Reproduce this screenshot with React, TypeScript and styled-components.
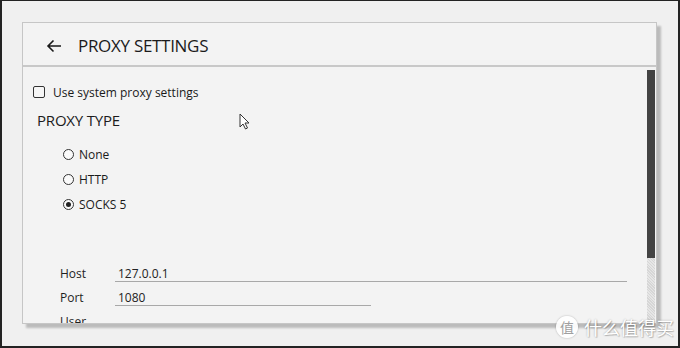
import React from "react";
import styled, { createGlobalStyle } from "styled-components";

const Global = createGlobalStyle`
  html, body { margin: 0; padding: 0; background: #f0f0f0; }
  body { font-family: "Open Sans", "Noto Sans", sans-serif; color: #1a1a1a; }
`;

const Frame = styled.div`
  position: relative;
  width: 680px;
  height: 348px;
  box-sizing: border-box;
  border: 2px solid #232323;
  border-top-width: 1px;
  background: #f0f0f0;
  padding: 21px 0 0 20px;
  overflow: hidden;
`;

const Panel = styled.div`
  width: 635px;
  height: 302px;
  box-sizing: border-box;
  border: 1px solid #c6c6c6;
  background: #f3f3f3;
  box-shadow: 4px 4px 2px rgba(0, 0, 0, 0.22);
  display: flex;
  flex-direction: column;
`;

const Header = styled.div`
  height: 42px;
  flex: none;
  display: flex;
  align-items: center;
  border-bottom: 2px solid #c8c8c8;
  padding-left: 23px;
`;

const BackButton = styled.div`
  width: 16px;
  height: 16px;
  display: flex;
  align-items: center;
  justify-content: center;
  margin-right: 16px;
  margin-top: 3px;
`;

const Title = styled.div`
  font-size: 17px;
  letter-spacing: -0.3px;
  color: #1b1b1b;
  margin-top: 3px;
`;

const Body = styled.div`
  flex: 1;
  display: flex;
  overflow: hidden;
`;

const Content = styled.div`
  flex: 1;
  padding: 17px 0 0 10px;
  overflow: hidden;
`;

const CheckRow = styled.label`
  display: flex;
  align-items: center;
  gap: 8px;
  font-size: 12px;
  height: 16px;
`;

const CheckBox = styled.span`
  width: 10px;
  height: 10px;
  border: 1.5px solid #333;
  border-radius: 2px;
  background: #f6f6f6;
`;

const Section = styled.div`
  font-size: 15px;
  letter-spacing: -0.2px;
  margin: 10px 0 0 4px;
  color: #1b1b1b;
`;

const RadioList = styled.div`
  display: flex;
  flex-direction: column;
  gap: 9px;
  margin: 16px 0 0 30px;
`;

const RadioRow = styled.div`
  display: flex;
  align-items: center;
  gap: 5px;
  font-size: 12px;
  height: 16px;
`;

const RadioCircle = styled.span<{ $on?: boolean }>`
  width: 9px;
  height: 9px;
  border: 1px solid #333;
  border-radius: 50%;
  background: #fafafa;
  display: flex;
  align-items: center;
  justify-content: center;
  &::after {
    content: "";
    width: 5px;
    height: 5px;
    border-radius: 50%;
    background: ${(p) => (p.$on ? "#222" : "transparent")};
  }
`;

const Fields = styled.div`
  display: grid;
  grid-template-columns: 55px auto;
  row-gap: 6px;
  margin: 53px 0 0 27px;
  font-size: 12px;
`;

const FieldLabel = styled.div`
  height: 18px;
  line-height: 18px;
  color: #1e1e1e;
`;

const FieldInput = styled.div<{ $w: number }>`
  width: ${(p) => p.$w}px;
  height: 17px;
  line-height: 17px;
  border-bottom: 1px solid #a8a8a8;
  padding-left: 3px;
  box-sizing: border-box;
  color: #222;
`;

const ScrollTrack = styled.div`
  width: 8px;
  margin: 3px 1px 2px 0;
  display: flex;
  flex-direction: column;
  background: repeating-linear-gradient(45deg, #d6d6d6 0 1px, #e6e6e6 1px 2px);
`;

const ScrollThumb = styled.div`
  height: 188px;
  background: #434343;
`;

const Cursor = styled.svg`
  position: absolute;
  left: 237px;
  top: 112px;
`;

const Watermark = styled.div`
  position: absolute;
  right: 4px;
  bottom: 6px;
  display: flex;
  align-items: center;
  gap: 6px;
  color: #fff;
  font-family: "Noto Sans CJK SC", sans-serif;
  font-size: 18px;
  text-shadow: 0 0 2px rgba(0, 0, 0, 0.3), 1px 1px 1px rgba(0, 0, 0, 0.2);
`;

const Badge = styled.span`
  width: 22px;
  height: 22px;
  border-radius: 50%;
  background: rgba(255, 255, 255, 0.92);
  box-shadow: 0 0 2px rgba(0, 0, 0, 0.3);
  color: #a0a0a0;
  text-shadow: none;
  font-size: 14px;
  display: flex;
  align-items: center;
  justify-content: center;
`;

export default function App() {
  return (
    <>
      <Global />
      <Frame>
        <Panel>
          <Header>
            <BackButton>
              <svg width="16" height="14" viewBox="0 0 16 14">
                <path d="M15 7H2M7.5 1.5L2 7l5.5 5.5" fill="none" stroke="#1a1a1a" strokeWidth="1.6" />
              </svg>
            </BackButton>
            <Title>PROXY SETTINGS</Title>
          </Header>
          <Body>
            <Content>
              <CheckRow>
                <CheckBox />
                Use system proxy settings
              </CheckRow>
              <Section>PROXY TYPE</Section>
              <RadioList>
                <RadioRow>
                  <RadioCircle />
                  None
                </RadioRow>
                <RadioRow>
                  <RadioCircle />
                  HTTP
                </RadioRow>
                <RadioRow>
                  <RadioCircle $on />
                  SOCKS 5
                </RadioRow>
              </RadioList>
              <Fields>
                <FieldLabel>Host</FieldLabel>
                <FieldInput $w={512}>127.0.0.1</FieldInput>
                <FieldLabel>Port</FieldLabel>
                <FieldInput $w={256}>1080</FieldInput>
                <FieldLabel>User</FieldLabel>
                <div />
              </Fields>
            </Content>
            <ScrollTrack>
              <ScrollThumb />
            </ScrollTrack>
          </Body>
        </Panel>
        <Cursor width="12" height="18" viewBox="0 0 12 18">
          <path d="M1 1v13l3-3 2.5 5 2-1-2.5-5H10z" fill="#fff" stroke="#333" strokeWidth="1" strokeLinejoin="round" />
        </Cursor>
        <Watermark>
          <Badge>值</Badge>
          什么值得买
        </Watermark>
      </Frame>
    </>
  );
}
